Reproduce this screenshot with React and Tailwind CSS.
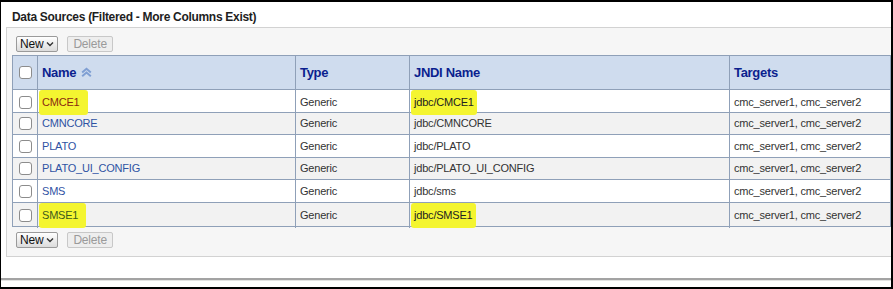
import React from 'react'

const rows = [
  { name: 'CMCE1', jndi: 'jdbc/CMCE1', hl: 'red', h: 'h-[23px]' },
  { name: 'CMNCORE', jndi: 'jdbc/CMNCORE', h: 'h-[22px]' },
  { name: 'PLATO', jndi: 'jdbc/PLATO', h: 'h-[23px]' },
  { name: 'PLATO_UI_CONFIG', jndi: 'jdbc/PLATO_UI_CONFIG', h: 'h-[22px]' },
  { name: 'SMS', jndi: 'jdbc/sms', h: 'h-[23px]' },
  { name: 'SMSE1', jndi: 'jdbc/SMSE1', hl: 'green', h: 'h-[23px]' },
]

const cols = 'grid grid-cols-[24px_258px_114px_320px_1fr]'

function Checkbox() {
  return <span className="block w-[13px] h-[13px] rounded-[3px] border border-[#8c8c8c] bg-white" />
}

function Toolbar() {
  return (
    <div className="flex items-center gap-[9px] pl-[4px]">
      <button className="flex items-center gap-[3px] h-[16px] px-[3px] border border-[#9a9a9a] rounded-[2px] bg-gradient-to-b from-white to-[#dcdcdc] text-[12px] tracking-[-0.2px] leading-none text-[#111]">
        New
        <svg width="8" height="6" viewBox="0 0 8 6"><path d="M1 1.5 L4 4.5 L7 1.5" fill="none" stroke="#333" strokeWidth="1.4" /></svg>
      </button>
      <button className="h-[16px] px-[5px] border border-[#c8c8c8] rounded-[2px] bg-[#eeeeee] text-[12px] tracking-[-0.2px] leading-none text-[#9a9a9a]">
        Delete
      </button>
    </div>
  )
}

function SortIcon() {
  return (
    <svg width="13" height="11" viewBox="0 0 12 10" className="ml-[4px]">
      <path d="M2 5 L6 1.5 L10 5" fill="none" stroke="#7f9fd3" strokeWidth="1.8" />
      <path d="M2 8.5 L6 5 L10 8.5" fill="none" stroke="#7f9fd3" strokeWidth="1.8" />
    </svg>
  )
}

export default function App() {
  return (
    <div className="w-[893px] h-[289px] overflow-hidden bg-white border-t-2 border-l border-r-2 border-b-2 border-black font-['Liberation_Sans',Arial,sans-serif]">
      <div className="h-[25px] pl-[11px] pt-[9px] text-[12px] tracking-[-0.3px] font-bold leading-none text-[#1e1e1e]">
        Data Sources (Filtered - More Columns Exist)
      </div>
      <div className="ml-[5px] w-[900px] border-t border-l border-b border-[#d2d2d2] bg-[#f6f6f6] pl-[5px] pt-[8px] pb-[8px]">
        <Toolbar />
        <div className="mt-[3px] w-[879px] border border-[#8fa0b8] text-[11px] tracking-[-0.2px]">
          <div className={`${cols} h-[34px] bg-[#cfdcee] border-b border-[#8fa0b8] font-bold text-[13px] tracking-[-0.3px] text-[#0b1f8e]`}>
            <div className="flex items-center justify-center"><Checkbox /></div>
            <div className="flex items-center pl-[4px] border-l border-[#8fa0b8]">Name<SortIcon /></div>
            <div className="flex items-center pl-[4px] border-l border-[#8fa0b8]">Type</div>
            <div className="flex items-center pl-[4px] border-l border-[#8fa0b8]">JNDI Name</div>
            <div className="flex items-center pl-[4px] border-l border-[#8fa0b8]">Targets</div>
          </div>
          {rows.map((r, i) => (
            <div key={r.name} className={`${cols} ${r.h} ${i % 2 ? 'bg-[#f2f2f2]' : 'bg-white'} ${i < rows.length - 1 ? 'border-b border-[#8fa0b8]' : ''}`}>
              <div className="flex items-center justify-center"><Checkbox /></div>
              <div className="flex items-center pl-[4px] border-l border-[#8fa0b8]">
                {r.hl ? (
                  <span className={`-ml-[3px] pl-[3px] pr-[8px] py-[4px] bg-[#f4f530] rounded-[3px] ${r.hl === 'red' ? 'text-[#8a2a10]' : 'text-[#3d5a1c]'}`}>{r.name}</span>
                ) : (
                  <span className="text-[#2f52a3]">{r.name}</span>
                )}
              </div>
              <div className="flex items-center pl-[4px] border-l border-[#8fa0b8] text-[#333]">Generic</div>
              <div className="flex items-center pl-[4px] border-l border-[#8fa0b8] text-[#333]">
                {r.hl ? (
                  <span className="-ml-[3px] px-[3px] py-[4px] bg-[#f4f530] rounded-[3px] text-[#222]">{r.jndi}</span>
                ) : r.jndi}
              </div>
              <div className="flex items-center pl-[4px] border-l border-[#8fa0b8] text-[#333]">cmc_server1, cmc_server2</div>
            </div>
          ))}
        </div>
        <div className="mt-[5px]"><Toolbar /></div>
      </div>
      <div className="mt-[21px] h-[3px] border-t-2 border-[#a3a3a3] bg-[#e2e2e2]" />
    </div>
  )
}
